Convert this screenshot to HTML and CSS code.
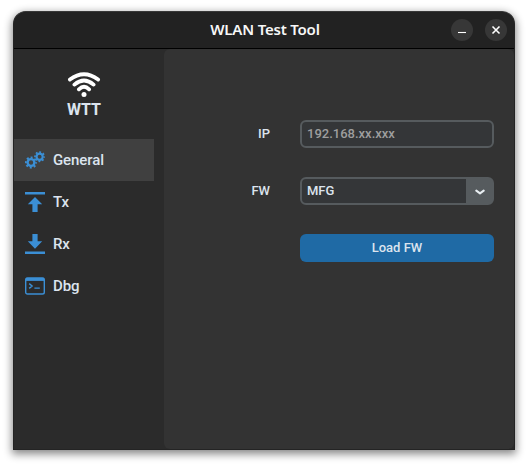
FILE: index.html
```html
<!DOCTYPE html>
<html lang="en">
<head>
<meta charset="utf-8">
<title>WLAN Test Tool</title>
<link rel="stylesheet" href="styles.css">
</head>
<body>
<div class="window">
  <header class="titlebar">
    <h1 class="title">WLAN Test Tool</h1>
    <div class="controls">
      <button class="control" aria-label="Minimize"><svg width="22" height="22" viewBox="0 0 22 22"><path d="M7 13.5h8" stroke="#fff" stroke-width="1.1"/></svg></button>
      <button class="control" aria-label="Close"><svg width="22" height="22" viewBox="0 0 22 22"><path d="M7.5 7.5l7 7M14.5 7.5l-7 7" stroke="#fff" stroke-width="1.6"/></svg></button>
    </div>
  </header>
  <div class="content">
    <aside class="sidebar">
      <div class="brand">
        <svg width="34" height="28" viewBox="0 0 34 28" fill="none" stroke="#fff" stroke-width="3.8" stroke-linecap="round">
          <path d="M2.9 9.6Q17 -1.2 31.1 9.6M7.4 14.6Q17 6.4 26.6 14.6M11.9 19.3Q17 14.3 22.1 19.3"/>
          <circle cx="17" cy="24.5" r="2.5" fill="#fff" stroke="none"/>
        </svg>
        <span class="brand-name">WTT</span>
      </div>
      <nav class="menu">
        <a class="item active">
          <svg class="icon" viewBox="0 0 20 20" fill="none" stroke="#3b8fd5">
            <circle cx="6" cy="12.5" r="3.4" stroke-width="2.4"/>
            <circle cx="6" cy="12.5" r="5.1" stroke-width="1.9" stroke-dasharray="2 2.005" stroke-dashoffset="1"/>
            <circle cx="14.6" cy="6.7" r="3.1" stroke-width="2.2"/>
            <circle cx="14.6" cy="6.7" r="4.6" stroke-width="1.7" stroke-dasharray="1.8 1.813" stroke-dashoffset=".9"/>
          </svg>General</a>
        <a class="item">
          <svg class="icon" viewBox="0 0 20 20" fill="#3b8fd5"><path d="M0 0h20v2.5H0zM10 5l7.2 7.2H12.6V20H7.4v-7.8H2.8z"/></svg>Tx</a>
        <a class="item">
          <svg class="icon" viewBox="0 0 20 20" fill="#3b8fd5"><path d="M0 17.4h20V20H0zM7.4 0h5.2v7.2h4.6L10 14.8 2.8 7.2h4.6z"/></svg>Rx</a>
        <a class="item">
          <svg class="icon" viewBox="0 0 20 20" fill="none" stroke="#3b8fd5"><rect x=".7" y="2" width="18.6" height="16" rx="1.8" stroke-width="1.4"/><path d="M1 3.4h18" stroke-width="3"/><path d="M4.2 7.6l2.9 2.4-2.9 2.4M9.4 12.1h5.4" stroke-width="1.4"/></svg>Dbg</a>
      </nav>
    </aside>
    <main class="panel">
      <label class="label" for="ip">IP</label>
      <input class="field" id="ip" placeholder="192.168.xx.xxx">
      <span class="label">FW</span>
      <div class="field select">
        <span>MFG</span>
        <span class="arrow"><svg width="10" height="6" viewBox="0 0 10 6"><path d="M1.3 1.6L5 4.4L8.7 1.6" fill="none" stroke="#e8eef2" stroke-width="2" stroke-linecap="round" stroke-linejoin="round"/></svg></span>
      </div>
      <button class="load">Load FW</button>
    </main>
  </div>
</div>
</body>
</html>
```
FILE: styles.css
```css
* { box-sizing: border-box; }

body {
  margin: 0;
  padding: 11px 13px 16px;
  background: #fff;
  font-family: Roboto, "Liberation Sans", sans-serif;
  font-weight: 500;
  color: #dce4ee;
  overflow: hidden;
}

.window {
  width: 502px;
  height: 439px;
  border: 1px solid #242424;
  border-top-color: #383838;
  border-radius: 13px 13px 0 0;
  background: #2b2b2b;
  box-shadow: 0 3px 9px 1px rgba(0, 0, 0, .48);
  display: flex;
  flex-direction: column;
}

.titlebar {
  height: 37px;
  flex: none;
  display: grid;
  grid-template-columns: 1fr auto 1fr;
  align-items: center;
  padding-right: 7px;
  background: #222;
  border-bottom: 1px solid #000;
  border-radius: 12px 12px 0 0;
}

.title {
  grid-column: 2;
  margin: 0 0 2px 9px;
  font: 600 15px/20px "Noto Sans", sans-serif;
  letter-spacing: -.2px;
  color: #f7f7f7;
}

.controls {
  display: flex;
  justify-content: flex-end;
  gap: 12px;
}

.control {
  width: 22px;
  height: 22px;
  padding: 0;
  border: 0;
  border-radius: 50%;
  background: #373737;
}

.control svg { display: block; }

.content {
  flex: 1;
  display: flex;
}

.sidebar { width: 150px; }

.brand {
  height: 90px;
  padding-top: 21px;
  width: 140px;
  display: flex;
  flex-direction: column;
  align-items: center;
}

.brand svg { flex: none; }

.brand-name {
  font-size: 16px;
  font-weight: 700;
  line-height: 24px;
}

.item {
  width: 140px;
  height: 42px;
  padding-left: 11px;
  display: flex;
  align-items: center;
  gap: 8px;
  font-size: 15px;
  letter-spacing: -.1px;
}

.active { background: #404040; }

.icon {
  width: 20px;
  height: 20px;
}

.panel {
  flex: 1;
  border-radius: 6px;
  background: #333;
  padding: 71px 20px 0 0;
  display: grid;
  grid-template-columns: 106px 194px;
  grid-template-rows: 28px 28px 28px;
  gap: 29px 30px;
  align-content: start;
  font-size: 13px;
}

.label {
  text-align: right;
  line-height: 27px;
}

.field {
  width: 194px;
  height: 28px;
  padding: 0 5px 1px;
  border: 2px solid #565b5e;
  border-radius: 6px;
  background: #343638;
  font: inherit;
  color: inherit;
}

.field::placeholder {
  color: #9e9e9e;
  opacity: 1;
}

.select {
  padding: 0 0 0 5px;
  display: flex;
  justify-content: space-between;
  line-height: 23px;
}

.arrow {
  width: 26px;
  background: #565b5e;
  display: flex;
  align-items: center;
  justify-content: center;
}

.arrow svg { margin: 2px 0 0 2px; }

.load {
  grid-column: 2;
  padding: 0 0 1px;
  border: 0;
  border-radius: 6px;
  background: #1f6aa5;
  font: inherit;
  color: inherit;
}
```
